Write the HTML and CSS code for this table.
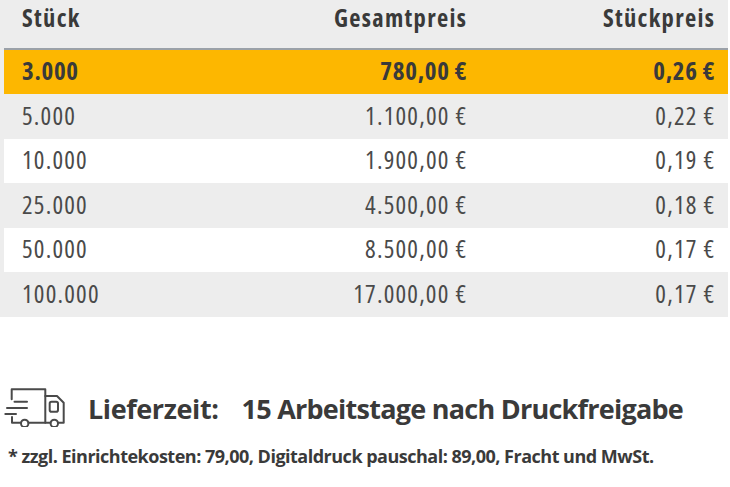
FILE: index.html
```html
<!DOCTYPE html>
<html lang="de">
<head>
<meta charset="utf-8">
<title>Staffelpreise</title>
<link rel="stylesheet" href="styles.css">
</head>
<body>
<div class="prices">
  <div class="row head">
    <div class="c1">Stück</div>
    <div class="c2">Gesamtpreis</div>
    <div class="c3">Stückpreis</div>
  </div>
  <div class="row active">
    <div class="c1">3.000</div>
    <div class="c2">780,00 €</div>
    <div class="c3">0,26 €</div>
  </div>
  <div class="row odd">
    <div class="c1">5.000</div>
    <div class="c2">1.100,00 €</div>
    <div class="c3">0,22 €</div>
  </div>
  <div class="row even">
    <div class="c1">10.000</div>
    <div class="c2">1.900,00 €</div>
    <div class="c3">0,19 €</div>
  </div>
  <div class="row odd">
    <div class="c1">25.000</div>
    <div class="c2">4.500,00 €</div>
    <div class="c3">0,18 €</div>
  </div>
  <div class="row even">
    <div class="c1">50.000</div>
    <div class="c2">8.500,00 €</div>
    <div class="c3">0,17 €</div>
  </div>
  <div class="row odd">
    <div class="c1">100.000</div>
    <div class="c2">17.000,00 €</div>
    <div class="c3">0,17 €</div>
  </div>
</div>

<div class="delivery">
  <svg class="truck" width="64" height="46" viewBox="0 0 64 46" aria-hidden="true">
    <g fill="none" stroke="#4a4a4a" stroke-width="2" stroke-linecap="round" stroke-linejoin="round">
      <path d="M9.7 18.3 V8.3 H43.3 V41.7"/>
      <path d="M43.3 15 H55 L61.7 21.7 V41.7 H56.5"/>
      <path d="M26.5 41.7 H48.5"/>
      <path d="M10 36 V41.7 H18.8"/>
      <path d="M12.5 20.7 H25"/>
      <path d="M5 27 H25"/>
      <path d="M3.3 33 H14"/>
      <rect x="47.7" y="20.7" width="8.3" height="10" rx="1.8"/>
      <circle cx="22.7" cy="42.4" r="3.7"/>
      <circle cx="52.3" cy="42.4" r="3.7"/>
    </g>
  </svg>
  <span class="label">Lieferzeit:</span>
  <span class="value">15 Arbeitstage nach Druckfreigabe</span>
</div>
<p class="note">* zzgl. Einrichtekosten: 79,00, Digitaldruck pauschal: 89,00, Fracht und MwSt.</p>
</body>
</html>
```
FILE: styles.css
```css
html, body {
  margin: 0;
  padding: 0;
  background: #ffffff;
}
body {
  width: 730px;
  height: 487px;
  overflow: hidden;
  font-family: "Open Sans", "Noto Sans", sans-serif;
  color: #3b3b3b;
}
.prices {
  width: 728px;
  background: #ededed;
  padding: 0 0 0 4px;
  box-sizing: border-box;
}
.row {
  display: grid;
  grid-template-columns: 274px 170px 248px;
  padding: 0 14px 3px 18px;
  align-items: center;
  height: 44.5px;
  box-sizing: border-box;
  font-size: 25px;
  font-stretch: condensed;
  letter-spacing: 1.2px;
  color: #4a4a4a;
  white-space: nowrap;
}
.row .c2, .row .c3 {
  text-align: right;
  margin-right: -1.2px;
}
.head {
  height: 49.5px;
  align-items: start;
  padding-top: 1px;
  padding-bottom: 0;
  font-weight: 700;
  font-size: 24.5px;
  letter-spacing: 1.3px;
  color: #3a3a3a;
  border-bottom: 2px solid #9ba1a8;
}
.active {
  background: #fdb700;
  font-weight: 700;
  letter-spacing: 0.7px;
  color: #3a3a3a;
}
.odd {
  background: #ededed;
}
.even {
  background: #ffffff;
}
.delivery {
  display: flex;
  align-items: center;
  margin-top: 67px;
  padding-left: 2px;
  height: 50px;
  font-weight: 700;
  color: #3a3a3a;
  white-space: nowrap;
}
.truck {
  flex: none;
  margin-right: 22px;
  margin-bottom: 10px;
}
.label {
  font-size: 27px;
  letter-spacing: -0.4px;
  margin-right: 23px;
}
.value {
  font-size: 27px;
  letter-spacing: -0.75px;
}
.note {
  margin: 10.5px 0 0 8px;
  font-size: 18px;
  font-weight: 700;
  letter-spacing: -0.5px;
  color: #3a3a3a;
  white-space: nowrap;
}
```
